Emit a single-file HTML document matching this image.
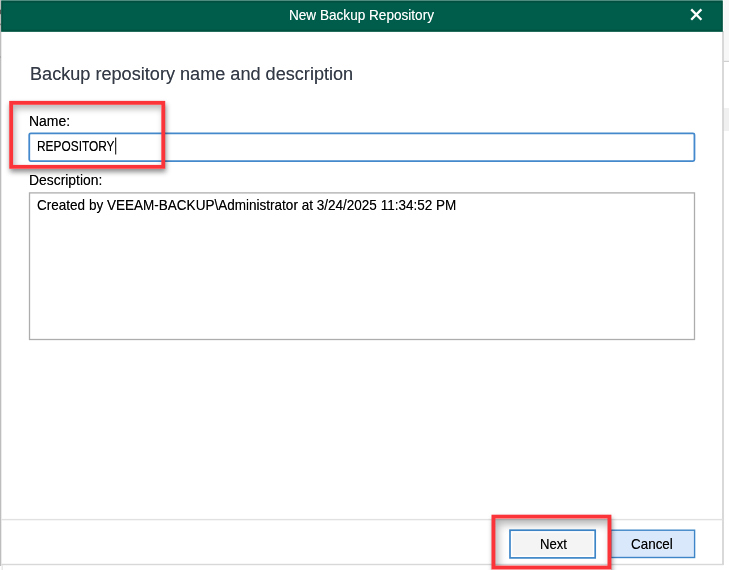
<!DOCTYPE html>
<html>
<head>
<meta charset="utf-8">
<title>New Backup Repository</title>
<style>
html,body{margin:0;padding:0;}
body{width:729px;height:570px;overflow:hidden;background:#fff;position:relative;font-family:"Liberation Sans",sans-serif;color:#000;}
.abs{position:absolute;}
svg.abs{left:0;top:0;}
.t{position:absolute;white-space:nowrap;transform-origin:0 0;line-height:1;text-shadow:0 0 .6px rgba(0,0,0,.55);}
#title{text-shadow:0 0 .6px rgba(255,255,255,.55);}
#head{text-shadow:0 0 .6px rgba(51,58,70,.55);}
#win{left:0;top:0;width:729px;height:570px;overflow:hidden;filter:blur(0.35px);}
.sh{position:absolute;}
#r1o{left:9px;top:101px;width:156px;height:68px;box-shadow:1px 3px 5px rgba(0,0,0,.45);}
#r1i{left:13px;top:105px;width:148px;height:60px;box-shadow:inset 2px 4px 6px rgba(0,0,0,.27);}
#r2o{left:492px;top:515px;width:119px;height:60px;box-shadow:1px 3px 5px rgba(0,0,0,.45);}
#r2i{left:495px;top:519px;width:113px;height:47px;box-shadow:inset 3px 5px 8px rgba(0,0,0,.30);}
</style>
</head>
<body>
<div id="win" class="abs">
  <svg class="abs" width="729" height="570" viewBox="0 0 729 570">
    <!-- window edges -->
    <rect x="0" y="0" width="1.3" height="566" fill="#bdbdbd"/>
    <rect x="0" y="9.7" width="1" height="4.5" fill="#555"/>
    <rect x="0" y="23.6" width="0.9" height="1.6" fill="#777"/>
    <rect x="0" y="56.4" width="0.9" height="1.2" fill="#999"/>
    <rect x="723.6" y="0" width="5.4" height="61" fill="#f7f7f7"/>
    <rect x="723.6" y="60.8" width="5.4" height="1.2" fill="#d0d0d0"/>
    <rect x="723.6" y="108" width="5.4" height="23" fill="#f0f0f0"/>
    <rect x="722.3" y="31" width="1.4" height="534" fill="#c9c9c9"/>
    <!-- title bar -->
    <rect x="1.2" y="0" width="721.5" height="31.9" fill="#4d8c7e"/>
    <rect x="1.2" y="1.0" width="721.5" height="30.6" fill="#00513f"/>
    <rect x="2.8" y="2.6" width="718.4" height="27" fill="#005d4b"/>
    <path d="M691.2 9.4 L701.4 19.8 M701.4 9.4 L691.2 19.8" stroke="#fff" stroke-width="2.3" fill="none"/>
    <!-- name input -->
    <rect x="29.25" y="133.35" width="665.2" height="27.7" rx="1.5" fill="#fff" stroke="#4489cc" stroke-width="1.8"/>
    <rect x="115.2" y="137.5" width="1" height="17" fill="#000"/>
    <!-- description box -->
    <rect x="29.5" y="192.9" width="665" height="146.6" fill="#fff" stroke="#adadad" stroke-width="1.3"/>
    <!-- separator + bottom -->
    <rect x="1.4" y="518.9" width="721" height="1.4" fill="#e1e1e1"/>
    <rect x="1.4" y="563.8" width="722" height="1.4" fill="#d8d8d8"/>
    <rect x="1.6" y="565.2" width="1.2" height="5" fill="#e4e4e4"/>
    <!-- buttons -->
    <rect x="610.7" y="530.2" width="83.9" height="27.3" fill="#dae8fb" stroke="#3d85c6" stroke-width="1.4"/>
    <rect x="510.0" y="530.2" width="85.2" height="27.7" fill="#fff" stroke="#3c86c8" stroke-width="1.7"/><rect x="512.4" y="532.6" width="80.4" height="22.9" fill="#f4f4f4"/>
  </svg>

  <span class="t" id="title" style="left:288.6px;top:7.77px;font-size:14.8px;color:#fff;transform:scaleX(0.918);">New Backup Repository</span>
  <span class="t" id="head" style="left:30.1px;top:65.79px;font-size:17.5px;color:#333a46;transform:scaleX(1.035);">Backup repository name and description</span>
  <span class="t" id="lname" style="left:28.5px;top:113.08px;font-size:15.5px;transform:scaleX(0.9);">Name:</span>
  <span class="t" id="vname" style="left:36.6px;top:138.93px;font-size:14.5px;transform:scaleX(0.82);">REPOSITORY</span>
  <span class="t" id="ldesc" style="left:28.8px;top:172.93px;font-size:14.5px;transform:scaleX(0.958);">Description:</span>
  <span class="t" id="vdesc" style="left:36.7px;top:198.43px;font-size:14.5px;transform:scaleX(0.933);">Created by VEEAM-BACKUP\Administrator at 3/24/2025 11:34:52 PM</span>
  <span class="t" id="tcancel" style="left:631.1px;top:536.67px;font-size:14.8px;transform:scaleX(0.908);">Cancel</span>
  <span class="t" id="tnext" style="left:540.1px;top:536.67px;font-size:14.8px;transform:scaleX(0.886);">Next</span>

  <div class="sh" id="r1o"></div>
  <div class="sh" id="r1i"></div>
  <div class="sh" id="r2o"></div>
  <div class="sh" id="r2i"></div>

  <svg class="abs" width="729" height="570" viewBox="0 0 729 570">
    <rect x="11.15" y="102.85" width="152.1" height="64.0" fill="none" stroke="#fb3439" stroke-width="3.9"/>
    <rect x="493.45" y="516.65" width="116.0" height="50.9" fill="none" stroke="#fb3439" stroke-width="3.9"/>
  </svg>
</div>
</body>
</html>
